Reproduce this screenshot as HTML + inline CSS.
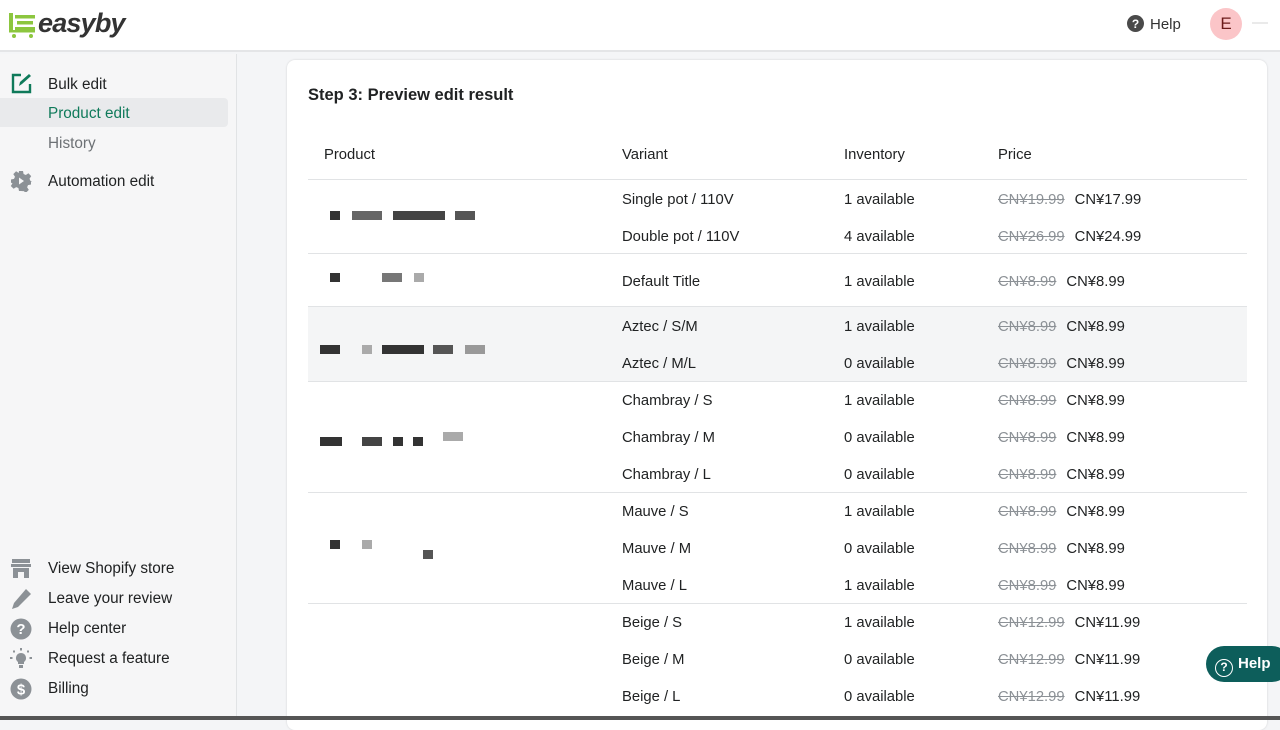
<!DOCTYPE html><html><head><meta charset="utf-8"><style>
*{margin:0;padding:0;box-sizing:border-box}
body{width:1280px;height:720px;overflow:hidden;background:#f4f5f7;font-family:"Liberation Sans",sans-serif;color:#202223;position:relative}
.top{position:absolute;left:0;top:0;width:1280px;height:52px;background:#fff;border-bottom:2px solid #e4e5e7}
.side{position:absolute;left:0;top:54px;width:237px;height:666px;background:#f6f6f7;border-right:1px solid #e1e3e5}
.side .t{font-size:15.3px}
.t{position:absolute;font-size:14.8px;white-space:nowrap}
.card{position:absolute;left:287px;top:60px;width:980px;height:670px;background:#fff;border-radius:8px;box-shadow:0 0 2px rgba(0,0,0,.15)}
.line{position:absolute;left:308px;width:939px;height:1px;background:#e1e3e5}
s{color:#8c9196;margin-right:10px}
.px{position:absolute;height:9px;background:#333}
.tb .t{margin-top:1px}
</style></head><body>
<div class="top">
<svg style="position:absolute;left:9px;top:13px" width="30" height="26" viewBox="0 0 30 26"><g fill="#8cc63f"><rect x="0" y="0" width="4" height="18"/><rect x="6" y="2" width="20" height="3.5"/><rect x="8" y="8" width="16" height="3.5"/><rect x="6" y="14" width="20" height="3.5"/><rect x="0" y="17" width="26" height="2.5"/><circle cx="5" cy="23" r="2"/><circle cx="22" cy="23" r="2"/></g></svg>
<div class="t" style="left:38px;top:8px;font-size:27px;font-weight:bold;font-style:italic;color:#333;letter-spacing:-0.8px">easyby</div>
<svg style="position:absolute;left:1127px;top:15px" width="17" height="17" viewBox="0 0 17 17"><circle cx="8.5" cy="8.5" r="8.5" fill="#4a4a4a"/><text x="8.5" y="13" font-size="12" font-weight="bold" fill="#fff" text-anchor="middle" font-family="Liberation Sans">?</text></svg>
<div class="t" style="left:1150px;top:16px;color:#333;font-size:15px">Help</div>
<div style="position:absolute;left:1210px;top:8px;width:32px;height:32px;border-radius:50%;background:#fbc5c8;color:#6b1a1a;font-size:17px;text-align:center;line-height:32px">E</div>
<div style="position:absolute;left:1252px;top:22px;width:16px;height:2px;background:#eaeaea"></div>
</div>
<div class="side">
<svg style="position:absolute;left:11px;top:19px" width="21" height="21" viewBox="0 0 21 21" fill="none" stroke="#0f7a5a" stroke-width="2.4"><path d="M10 2H2v17h17v-8"/><path d="M8 13l1-4 9-8 2 2-9 8z" fill="#0f7a5a" stroke="none"/></svg>
<div class="t" style="left:48px;top:22px">Bulk edit</div>
<div style="position:absolute;left:0;top:44px;width:228px;height:29px;background:#e9eaec;border-radius:0 4px 4px 0"></div>
<div class="t" style="left:48px;top:51px;color:#0f7a5a">Product edit</div>
<div class="t" style="left:48px;top:81px;color:#6d7175">History</div>
<svg style="position:absolute;left:10px;top:116px" width="22" height="22" viewBox="0 0 22 22"><path fill="#8c9196" d="M9 1h4l.6 3 2.2 1 2.6-1.7 2.8 2.8L19.5 8.7l1 2.3 3 .5v0H21v3l-3 .6-.9 2.2 1.7 2.6-2.8 2.8-2.6-1.7-2.2.9L13 21H9l-.6-3-2.2-.9-2.6 1.7-2.8-2.8 1.7-2.6L1.6 13 1 12.5V9.5l3-.6 1-2.2L3.3 4.1l2.8-2.8L8.7 3 9 1z"/><path fill="#f6f6f7" d="M9 7.5l5 3.5-5 3.5z"/></svg>
<div class="t" style="left:48px;top:119px">Automation edit</div>
<svg style="position:absolute;left:11px;top:505px" width="20" height="19" viewBox="0 0 20 19" fill="#8c9196"><rect x="1" y="0" width="18" height="4"/><path d="M0 5h20v3H0z"/><path d="M2 9h16v10h-5v-6H7v6H2z"/></svg>
<div class="t" style="left:48px;top:506px">View Shopify store</div>
<svg style="position:absolute;left:10px;top:534px" width="22" height="22" viewBox="0 0 22 22"><path fill="#8c9196" d="M16 1l5 5-13 13-6 2 2-6z"/></svg>
<div class="t" style="left:48px;top:536px">Leave your review</div>
<svg style="position:absolute;left:10px;top:564px" width="22" height="22" viewBox="0 0 22 22"><circle cx="11" cy="11" r="10.5" fill="#8c9196"/><text x="11" y="16" font-size="15" font-weight="bold" fill="#fff" text-anchor="middle" font-family="Liberation Sans">?</text></svg>
<div class="t" style="left:48px;top:566px">Help center</div>
<svg style="position:absolute;left:10px;top:594px" width="22" height="22" viewBox="0 0 22 22" fill="#8c9196"><path d="M11 5a5 5 0 0 0-3 9v2h6v-2a5 5 0 0 0-3-9z"/><rect x="9" y="17" width="4" height="3"/><rect x="10" y="0" width="2" height="2.5"/><rect x="0" y="9" width="2.5" height="2"/><rect x="19.5" y="9" width="2.5" height="2"/><rect x="3" y="2.5" width="2" height="2"/><rect x="17" y="2.5" width="2" height="2"/></svg>
<div class="t" style="left:48px;top:596px">Request a feature</div>
<svg style="position:absolute;left:10px;top:624px" width="22" height="22" viewBox="0 0 22 22"><circle cx="11" cy="11" r="10.5" fill="#8c9196"/><text x="11" y="16.5" font-size="15" font-weight="bold" fill="#fff" text-anchor="middle" font-family="Liberation Sans">$</text></svg>
<div class="t" style="left:48px;top:626px">Billing</div>
</div>
<div class="card"></div>
<div class="tb">
<div class="t" style="left:308px;top:85px;font-size:16.5px;font-weight:bold;color:#202223">Step 3: Preview edit result</div>
<div class="t" style="left:324px;top:146px">Product</div>
<div class="t" style="left:622px;top:146px">Variant</div>
<div class="t" style="left:844px;top:146px">Inventory</div>
<div class="t" style="left:998px;top:146px">Price</div>
<div style="position:absolute;left:308px;top:307px;width:939px;height:74px;background:#f4f5f6"></div>
<div class="line" style="top:179px"></div><div class="line" style="top:253px"></div><div class="line" style="top:306px"></div><div class="line" style="top:381px"></div><div class="line" style="top:492px"></div><div class="line" style="top:603px"></div>
<div class="px" style="left:330px;top:211px;width:10px"></div><div class="px" style="left:352px;top:211px;width:30px;background:#666"></div><div class="px" style="left:393px;top:211px;width:52px;background:#444"></div><div class="px" style="left:455px;top:211px;width:20px;background:#555"></div>
<div class="px" style="left:330px;top:273px;width:10px"></div><div class="px" style="left:382px;top:273px;width:20px;background:#777"></div><div class="px" style="left:414px;top:273px;width:10px;background:#aaa"></div>
<div class="px" style="left:320px;top:345px;width:20px"></div><div class="px" style="left:362px;top:345px;width:10px;background:#aaa"></div><div class="px" style="left:382px;top:345px;width:42px;background:#333"></div><div class="px" style="left:433px;top:345px;width:20px;background:#555"></div><div class="px" style="left:465px;top:345px;width:20px;background:#999"></div>
<div class="px" style="left:320px;top:437px;width:22px"></div><div class="px" style="left:362px;top:437px;width:20px;background:#444"></div><div class="px" style="left:393px;top:437px;width:10px"></div><div class="px" style="left:413px;top:437px;width:10px"></div><div class="px" style="left:443px;top:432px;width:20px;background:#aaa"></div>
<div class="px" style="left:330px;top:540px;width:10px"></div><div class="px" style="left:362px;top:540px;width:10px;background:#aaa"></div><div class="px" style="left:423px;top:550px;width:10px;background:#555"></div>
<div class="t" style="left:622px;top:191px">Single pot / 110V</div><div class="t" style="left:844px;top:191px">1 available</div><div class="t" style="left:998px;top:191px"><s>CN¥19.99</s>CN¥17.99</div>
<div class="t" style="left:622px;top:228px">Double pot / 110V</div><div class="t" style="left:844px;top:228px">4 available</div><div class="t" style="left:998px;top:228px"><s>CN¥26.99</s>CN¥24.99</div>
<div class="t" style="left:622px;top:273px">Default Title</div><div class="t" style="left:844px;top:273px">1 available</div><div class="t" style="left:998px;top:273px"><s>CN¥8.99</s>CN¥8.99</div>
<div class="t" style="left:622px;top:318px">Aztec / S/M</div><div class="t" style="left:844px;top:318px">1 available</div><div class="t" style="left:998px;top:318px"><s>CN¥8.99</s>CN¥8.99</div>
<div class="t" style="left:622px;top:355px">Aztec / M/L</div><div class="t" style="left:844px;top:355px">0 available</div><div class="t" style="left:998px;top:355px"><s>CN¥8.99</s>CN¥8.99</div>
<div class="t" style="left:622px;top:392px">Chambray / S</div><div class="t" style="left:844px;top:392px">1 available</div><div class="t" style="left:998px;top:392px"><s>CN¥8.99</s>CN¥8.99</div>
<div class="t" style="left:622px;top:429px">Chambray / M</div><div class="t" style="left:844px;top:429px">0 available</div><div class="t" style="left:998px;top:429px"><s>CN¥8.99</s>CN¥8.99</div>
<div class="t" style="left:622px;top:466px">Chambray / L</div><div class="t" style="left:844px;top:466px">0 available</div><div class="t" style="left:998px;top:466px"><s>CN¥8.99</s>CN¥8.99</div>
<div class="t" style="left:622px;top:503px">Mauve / S</div><div class="t" style="left:844px;top:503px">1 available</div><div class="t" style="left:998px;top:503px"><s>CN¥8.99</s>CN¥8.99</div>
<div class="t" style="left:622px;top:540px">Mauve / M</div><div class="t" style="left:844px;top:540px">0 available</div><div class="t" style="left:998px;top:540px"><s>CN¥8.99</s>CN¥8.99</div>
<div class="t" style="left:622px;top:577px">Mauve / L</div><div class="t" style="left:844px;top:577px">1 available</div><div class="t" style="left:998px;top:577px"><s>CN¥8.99</s>CN¥8.99</div>
<div class="t" style="left:622px;top:614px">Beige / S</div><div class="t" style="left:844px;top:614px">1 available</div><div class="t" style="left:998px;top:614px"><s>CN¥12.99</s>CN¥11.99</div>
<div class="t" style="left:622px;top:651px">Beige / M</div><div class="t" style="left:844px;top:651px">0 available</div><div class="t" style="left:998px;top:651px"><s>CN¥12.99</s>CN¥11.99</div>
<div class="t" style="left:622px;top:688px">Beige / L</div><div class="t" style="left:844px;top:688px">0 available</div><div class="t" style="left:998px;top:688px"><s>CN¥12.99</s>CN¥11.99</div>
</div>
<div style="position:absolute;left:0;top:716px;width:1280px;height:4px;background:#555"></div>
<div style="position:absolute;left:1206px;top:646px;width:84px;height:36px;border-radius:18px;background:#0d5e5b;color:#fff;font-size:15px;font-weight:bold;line-height:36px;padding-left:9px"><span style="display:inline-block;width:18px;height:18px;border:1.6px solid #fff;border-radius:50%;font-size:12px;text-align:center;line-height:15px;vertical-align:-3px;margin-right:5px">?</span>Help</div>
</body></html>
